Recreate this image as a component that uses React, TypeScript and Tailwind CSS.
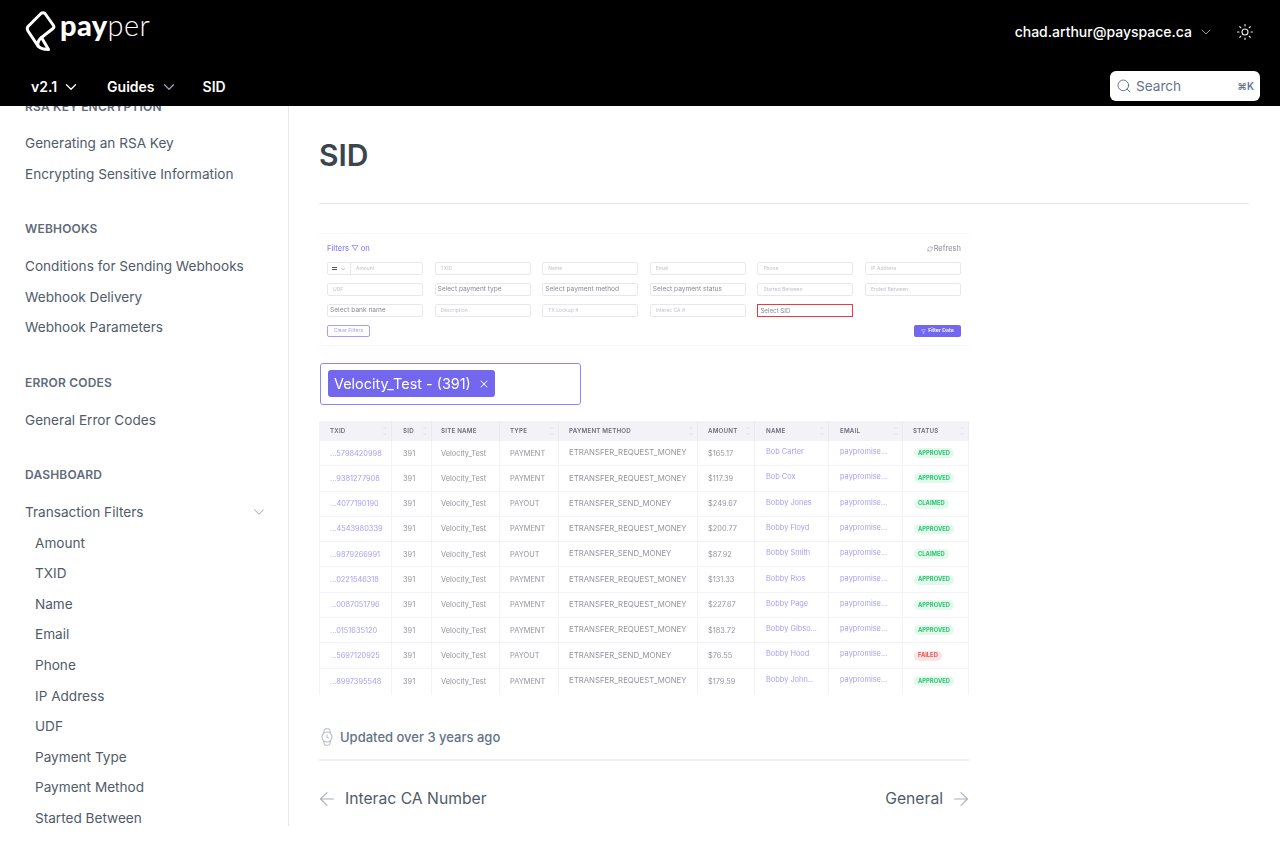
import { ArrowLeft, ArrowRight, ChevronDown, ChevronUp, Filter, RefreshCw, Search, Sun, Watch, X } from 'lucide-react'

const sections = [
  { title: 'RSA Key Encryption', items: ['Generating an RSA Key', 'Encrypting Sensitive Information'] },
  { title: 'Webhooks', items: ['Conditions for Sending Webhooks', 'Webhook Delivery', 'Webhook Parameters'] },
  { title: 'Error Codes', items: ['General Error Codes'] },
]

const filterPages = ['Amount', 'TXID', 'Name', 'Email', 'Phone', 'IP Address', 'UDF', 'Payment Type', 'Payment Method', 'Started Between']

const filterFields = [
  { label: 'TXID' },
  { label: 'Name' },
  { label: 'Email' },
  { label: 'Phone' },
  { label: 'IP Address' },
  { label: 'UDF' },
  { label: 'Select payment type', select: true },
  { label: 'Select payment method', select: true },
  { label: 'Select payment status', select: true },
  { label: 'Started Between' },
  { label: 'Ended Between' },
  { label: 'Select bank name', select: true },
  { label: 'Description' },
  { label: 'TX Lookup #' },
  { label: 'Interac CA #' },
]

const columns = [
  { label: 'TXID', pad: 'pl-[10px]' },
  { label: 'SID', pad: 'pl-[11px]' },
  { label: 'Site Name', pad: 'pl-[9px]' },
  { label: 'Type', pad: 'pl-[10px]' },
  { label: 'Payment Method', pad: 'pl-[10px]' },
  { label: 'Amount', pad: 'pl-[10px]' },
  { label: 'Name', pad: 'pl-[11px]' },
  { label: 'Email', pad: 'pl-[11px]' },
  { label: 'Status', pad: 'pl-[10px]' },
]

const rows = [
  ['...5798420998', 'PAYMENT', '$165.17', 'Bob Carter', 'APPROVED'],
  ['...9381277908', 'PAYMENT', '$117.39', 'Bob Cox', 'APPROVED'],
  ['...4077190190', 'PAYOUT', '$249.67', 'Bobby Jones', 'CLAIMED'],
  ['...4543980339', 'PAYMENT', '$200.77', 'Bobby Floyd', 'APPROVED'],
  ['...9879266991', 'PAYOUT', '$87.92', 'Bobby Smith', 'CLAIMED'],
  ['...0221546318', 'PAYMENT', '$131.33', 'Bobby Rios', 'APPROVED'],
  ['...0087051796', 'PAYMENT', '$227.67', 'Bobby Page', 'APPROVED'],
  ['...0151635120', 'PAYMENT', '$183.72', 'Bobby Gibso...', 'APPROVED'],
  ['...5697120925', 'PAYOUT', '$76.55', 'Bobby Hood', 'FAILED'],
  ['...8997395548', 'PAYMENT', '$179.59', 'Bobby John...', 'APPROVED'],
]

const tableCols = 'grid grid-cols-[72px_40px_68px_59px_139px_57px_74px_74px_66px]'
const cellClass = 'flex items-center border-r border-[#f3f2f7] whitespace-nowrap overflow-hidden'

function Logo() {
  return (
    <div className="flex items-center">
      <svg viewBox="24 10 34 42" className="w-[34px] h-[42px]" fill="none" stroke="white" strokeWidth="3" strokeLinejoin="round" strokeLinecap="round">
        <path d="M41 13.5 L28 26.5 Q26.5 28.5 28 31 L38 46 Q41 49.5 48.5 49.5 L41.5 37.5 L53 28.5 Q54.5 27 53.5 25.5 L45 13.5 Q43 12 41 13.5 Z" />
        <path d="M41.5 37.5 Q37 41 38 46" />
      </svg>
      <span className="ml-[2px] -mt-[14px] font-['Lato',sans-serif] text-[29px] leading-none text-white tracking-[0.4px]">
        <span className="font-black">pay</span>
        <span className="font-light">per</span>
      </span>
    </div>
  )
}

function Header() {
  return (
    <header className="h-[106px] bg-black text-white flex flex-col justify-between relative z-10">
      <div className="flex items-start justify-between pl-[24px] pr-[26px] pt-[10px]">
        <Logo />
        <div className="flex items-center mt-[13px] h-[18px]">
          <span className="text-sm font-medium">chad.arthur@payspace.ca</span>
          <ChevronDown className="ml-[6px] w-[16px] h-[16px] text-gray-400" strokeWidth={1.5} />
          <Sun className="ml-[22px] w-[18px] h-[18px] text-gray-200" strokeWidth={1.5} />
        </div>
      </div>
      <div className="flex items-center justify-between pl-[31px] pr-[20px] pb-[5px]">
        <nav className="flex items-center text-sm font-semibold pt-[2px]">
          <span>v2.1</span>
          <ChevronDown className="ml-[5px] w-[18px] h-[18px]" strokeWidth={1.75} />
          <span className="ml-[27px]">Guides</span>
          <ChevronDown className="ml-[5px] w-[18px] h-[18px] text-gray-400" strokeWidth={1.75} />
          <span className="ml-[25px]">SID</span>
        </nav>
        <div className="w-[150px] h-[30px] bg-white rounded-md flex items-center pl-[6px] pr-[6px] text-[#64748b]">
          <Search className="w-[16px] h-[16px]" strokeWidth={1.5} />
          <span className="ml-[4px] text-[13.6px]">Search</span>
          <span className="ml-auto text-[10px] font-semibold">⌘K</span>
        </div>
      </div>
    </header>
  )
}

function SideLink({ label, indent }: { label: string; indent?: boolean }) {
  return (
    <div className={`h-[30.6px] flex items-center text-[13.6px] text-[#4f5b69] ${indent ? 'pl-[10px]' : ''}`}>
      {label}
    </div>
  )
}

function SectionTitle({ title }: { title: string }) {
  return <div className="h-4 mb-[13.7px] flex items-center text-xs font-semibold uppercase tracking-[0.2px] text-[#5f6b7a]">{title}</div>
}

function Sidebar() {
  return (
    <aside className="w-[289px] shrink-0 h-[720px] overflow-hidden border-r border-[#e5e7eb]">
      <div className="-mt-[7.4px] pl-[25px] pr-[22px]">
        {sections.map((section, index) => (
          <div key={section.title} className={index > 0 ? 'mt-8' : ''}>
            <SectionTitle title={section.title} />
            {section.items.map((item) => (
              <SideLink key={item} label={item} />
            ))}
          </div>
        ))}
        <div className="mt-8">
          <SectionTitle title="Dashboard" />
          <div className="h-[30.6px] flex items-center justify-between text-[13.6px] text-[#4f5b69]">
            Transaction Filters
            <ChevronDown className="-mr-[2px] w-[18px] h-[18px] text-gray-400" strokeWidth={1.25} />
          </div>
          {filterPages.map((item) => (
            <SideLink key={item} label={item} indent />
          ))}
        </div>
      </div>
    </aside>
  )
}

function FilterField({ label, select }: { label: string; select?: boolean }) {
  return (
    <div className={`h-[13px] border border-[#e8e8ec] rounded-[2px] flex items-center ${select ? 'pl-[2px] text-[6.6px] text-[#8a8a94]' : 'pl-[5px] text-[5px] text-[#c4c4cc]'}`}>
      {label}
    </div>
  )
}

function FilterPanel() {
  return (
    <div className="h-[113px] border-y border-[#f6f6f8] px-2 pt-[10px]">
      <div className="h-[10px] flex items-center justify-between mb-[8px]">
        <span className="text-[7.5px] font-medium text-[#8f85f3]">Filters ▽ on</span>
        <span className="flex items-center text-[7.5px] text-[#8a8a94]">
          <RefreshCw className="w-[6px] h-[6px] mr-[1px]" />
          Refresh
        </span>
      </div>
      <div className="grid grid-cols-6 gap-x-[11.6px] gap-y-2">
        <div className="h-[13px] border border-[#e8e8ec] rounded-[2px] flex items-center text-[5px] text-[#c4c4cc]">
          <span className="w-[23px] h-full border-r border-[#e8e8ec] flex items-center justify-center gap-[3px]">
            <span className="w-[5px] h-[3px] border-y border-[#555]" />
            <ChevronDown className="w-[6px] h-[6px] text-[#7367f0]" />
          </span>
          <span className="ml-[5px]">Amount</span>
        </div>
        {filterFields.map((field) => (
          <FilterField key={field.label} label={field.label} select={field.select} />
        ))}
        <div className="h-[13px] border-[1.5px] border-[#ea3a46] flex items-center pl-[2px] text-[6.2px] text-[#8a8a94]">Select SID</div>
      </div>
      <div className="flex items-center justify-between mt-2">
        <span className="h-[12px] w-[43px] border border-[#a79ff5] rounded-[2px] flex items-center justify-center text-[5.2px] text-[#a79ff5]">Clear Filters</span>
        <span className="h-[12px] w-[47px] bg-[#7367f0] rounded-[2px] flex items-center justify-center gap-[2px] text-[5.2px] font-semibold text-white">
          <Filter className="w-[5px] h-[5px]" />
          Filter Data
        </span>
      </div>
    </div>
  )
}

function SiteChip() {
  return (
    <div className="ml-px mt-[17px] w-[261px] h-[41.5px] border border-[#8f85f3] rounded-[3px] flex items-center pl-[7px]">
      <span className="h-[27px] w-[167px] bg-[#7367f0] rounded-[3px] flex items-center pl-[6px] text-[14.4px] text-white">
        Velocity_Test - (391)
        <X className="ml-[7px] w-[12px] h-[12px]" />
      </span>
    </div>
  )
}

function StatusBadge({ status }: { status: string }) {
  const color = status === 'FAILED' ? 'bg-[#fce5e6] text-[#ea5455]' : 'bg-[#e5f8ed] text-[#28c76f]'
  return <span className={`h-[10px] px-[4px] rounded-full flex items-center text-[5.8px] font-bold ${color}`}>{status}</span>
}

function DataTable() {
  return (
    <div className="mt-[16.5px] w-[650px] text-[7.4px] text-[#94949d] border-l border-[#f3f2f7]">
      <div className={`${tableCols} h-[20px] bg-[#f3f2f7]`}>
        {columns.map((col) => (
          <div key={col.label} className={`flex items-center justify-between pr-[3px] border-r border-[#ebe9f1] text-[6.2px] font-semibold uppercase tracking-[0.2px] text-[#6e6b7b] ${col.pad}`}>
            {col.label}
            {col.label !== 'Site Name' && (
              <span className="flex flex-col text-[#d0d0d6]">
                <ChevronUp className="w-[6px] h-[6px]" />
                <ChevronDown className="w-[6px] h-[6px]" />
              </span>
            )}
          </div>
        ))}
      </div>
      {rows.map((row, index) => (
        <div key={row[0]} className={`${tableCols} h-[25.3px] ${index < rows.length - 1 ? 'border-b border-[#f3f2f7]' : ''}`}>
          <div className={`${cellClass} pl-[10px] text-[#a79ff5]`}>{row[0]}</div>
          <div className={`${cellClass} pl-[11px]`}>391</div>
          <div className={`${cellClass} pl-[9px]`}>Velocity_Test</div>
          <div className={`${cellClass} pl-[10px]`}>{row[1]}</div>
          <div className={`${cellClass} pl-[10px] text-[7.8px]`}>{row[1] === 'PAYOUT' ? 'ETRANSFER_SEND_MONEY' : 'ETRANSFER_REQUEST_MONEY'}</div>
          <div className={`${cellClass} pl-[10px]`}>{row[2]}</div>
          <div className={`${cellClass} pl-[11px] pb-[3px] text-[#a79ff5]`}>{row[3]}</div>
          <div className={`${cellClass} pl-[11px] pb-[3px] text-[#a79ff5]`}>paypromise...</div>
          <div className={`${cellClass} pl-[11px]`}>
            <StatusBadge status={row[4]} />
          </div>
        </div>
      ))}
    </div>
  )
}

export default function App() {
  return (
    <div className="w-[1280px] h-[858px] bg-white overflow-hidden font-['Inter',sans-serif]">
      <Header />
      <div className="flex">
        <Sidebar />
        <main className="flex-1 pl-[30px] pr-[31px]">
          <div className="pt-[31px] pb-[30px] border-b border-[#e5e7eb]">
            <h1 className="text-3xl font-semibold leading-9 text-[#3b454e]">SID</h1>
          </div>
          <div className="mt-[29px] w-[650px] blur-[0.3px]">
            <FilterPanel />
            <SiteChip />
            <DataTable />
          </div>
          <div className="w-[650px] mt-[33.5px] pb-[12px] border-b-2 border-[#f0f1f2] flex items-center text-[13px] font-medium text-[#637288]">
            <Watch className="-ml-[2px] w-[20px] h-[20px] text-[#b5bcc4]" strokeWidth={1.25} />
            <span className="ml-[3px]">Updated over 3 years ago</span>
          </div>
          <div className="w-[650px] mt-[25.5px] flex items-center text-[15.7px] text-[#4f5b69]">
            <ArrowLeft className="-ml-[3px] w-[22px] h-[22px] text-[#a9b1bb]" strokeWidth={1.25} />
            <span className="ml-[7px]">Interac CA Number</span>
            <span className="ml-auto">General</span>
            <ArrowRight className="ml-[7px] -mr-[3px] w-[22px] h-[22px] text-[#a9b1bb]" strokeWidth={1.25} />
          </div>
        </main>
      </div>
    </div>
  )
}
